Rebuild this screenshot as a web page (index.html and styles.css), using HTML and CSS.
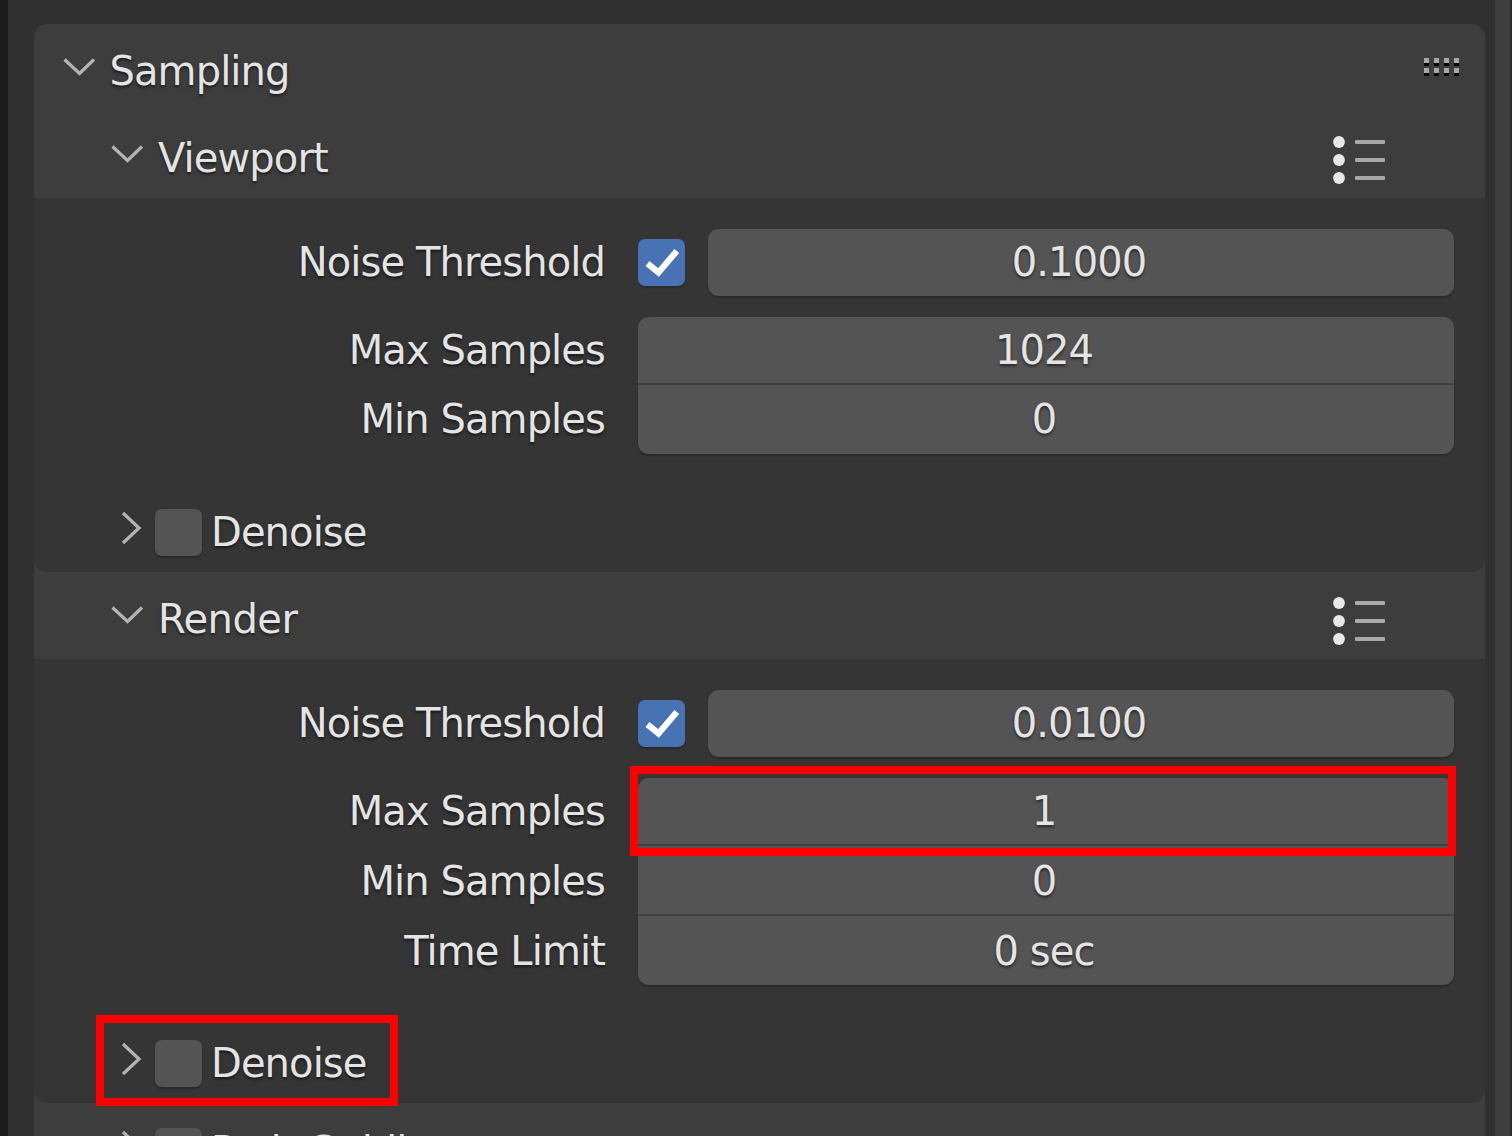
FILE: index.html
```html
<!DOCTYPE html>
<html lang="en">
<head>
<meta charset="utf-8">
<title>Sampling</title>
<link rel="stylesheet" href="styles.css">
</head>
<body>
<svg class="defs" aria-hidden="true">
  <symbol id="down" viewBox="0 0 34 20"><path d="M2.5 2.5 17.5 16.5 32 2.5"/></symbol>
  <symbol id="right" viewBox="0 0 22 36"><path d="M3 3 19 18 3 33"/></symbol>
  <symbol id="check" viewBox="0 0 47 47"><path d="M9.5 24.5 20.5 33.5 38.8 12"/></symbol>
  <symbol id="list" viewBox="0 0 54 50">
    <g class="dots"><circle cx="7" cy="7" r="5.9"/><circle cx="7" cy="25" r="5.9"/><circle cx="7" cy="43" r="5.9"/></g>
    <g class="lines"><rect x="23" y="5" width="30" height="4" rx="1"/><rect x="23" y="23" width="30" height="4" rx="1"/><rect x="23" y="41" width="30" height="4" rx="1"/></g>
  </symbol>
</svg>
<div class="window">
  <div class="edge"></div>
  <main class="panel">
    <header class="head head-main">
      <svg class="down"><use href="#down"/></svg><h1>Sampling</h1>
      <div class="grip"><i></i><i></i><i></i><i></i><i></i><i></i><i></i><i></i></div>
    </header>
    <header class="head">
      <svg class="down"><use href="#down"/></svg><h2>Viewport</h2>
      <svg class="list"><use href="#list"/></svg>
    </header>
    <section class="body">
      <div class="row"><label>Noise Threshold</label><span class="box on"><svg><use href="#check"/></svg></span><div class="field">0.1000</div></div>
      <div class="group">
        <div class="row first"><label>Max Samples</label><div class="field">1024</div></div>
        <div class="row last"><label>Min Samples</label><div class="field">0</div></div>
      </div>
      <div class="toggle"><svg class="right"><use href="#right"/></svg><span class="box"></span><span class="name">Denoise</span></div>
    </section>
    <header class="head">
      <svg class="down"><use href="#down"/></svg><h2 class="render">Render</h2>
      <svg class="list"><use href="#list"/></svg>
    </header>
    <section class="body">
      <div class="row"><label>Noise Threshold</label><span class="box on"><svg><use href="#check"/></svg></span><div class="field">0.0100</div></div>
      <div class="group">
        <div class="row first"><label>Max Samples</label><div class="field">1</div><div class="mark mark-field"></div></div>
        <div class="row middle"><label>Min Samples</label><div class="field">0</div></div>
        <div class="row last low"><label>Time Limit</label><div class="field">0 sec</div></div>
      </div>
      <div class="toggle"><svg class="right"><use href="#right"/></svg><span class="box"></span><span class="name">Denoise</span><div class="mark mark-toggle"></div></div>
    </section>
    <header class="toggle next"><svg class="right"><use href="#right"/></svg><span class="box"></span><span class="name">Path Guiding</span></header>
  </main>
  <div class="scroll"></div>
</div>
</body>
</html>
```
FILE: styles.css
```css
* { box-sizing: border-box; }
body {
  margin: 0;
  background: #303030;
  color: #e4e4e4;
  font: 40px/1.164 "DejaVu Sans", sans-serif;
  letter-spacing: -0.9px;
  white-space: nowrap;
  text-shadow: 0 2px 3px rgba(0, 0, 0, .55);
}
h1, h2 { margin: 0; font: inherit; }
.defs { position: absolute; width: 0; height: 0; }
.window {
  display: grid;
  grid-template-columns: 8px 1477px 25px;
  height: 1136px;
  overflow: hidden;
}
.edge { background: #1d1d1d; }
.panel {
  margin: 24px 0 0 26px;
  height: 1130px;
  background: #3d3d3d;
  border-radius: 13px 13px 0 0;
}
.scroll { margin-left: 10px; background: #3e3e3e; box-shadow: 2px 0 0 #2b2b2b; }

.head { display: flex; align-items: center; height: 87px; padding: 7px 99px 0 76px; }
.head-main { padding: 7px 26px 0 28px; }
.down { flex: none; width: 34px; height: 20px; margin-bottom: 9px; }
.down, .right { fill: none; stroke: #b4b4b4; stroke-width: 3.2; }
h1 { margin-left: 13.5px; }
h2 { margin-left: 14px; }
.render { letter-spacing: -0.5px; }
.list { width: 54px; height: 50px; margin: 4px 0 0 auto; }
.dots { fill: #e8e8e8; }
.lines { fill: #a9a9a9; }
.grip { display: grid; grid-template-columns: repeat(4, 5px); gap: 5px; margin: 0 0 12px auto; }
.grip i { height: 5px; background: #a8a8a8; box-shadow: 0 3px 0 #060606; }

.body { padding-top: 31px; background: #353535; border-radius: 0 0 13px 13px; }
.row { display: flex; align-items: center; height: 67px; padding-right: 31px; position: relative; }
label { width: 571px; margin-right: 33px; text-align: right; }
.row .box { margin-right: 23px; }
.field {
  flex: 1;
  align-self: stretch;
  display: flex;
  align-items: center;
  justify-content: center;
  padding-right: 4px;
  background: #545454;
  border-radius: 11px;
  box-shadow: 0 2px 2px rgba(0, 0, 0, .22);
}
.group { margin-top: 21px; }
.first { height: 68px; }
.first label { padding-bottom: 2px; }
.middle { height: 70px; }
.last { height: 69px; }
.low label, .low .field { padding-top: 1px; }
.first .field, .middle .field { border-bottom: 2px solid #404040; box-shadow: none; }
.first .field { border-radius: 11px 11px 0 0; }
.middle .field { padding-top: 2px; border-radius: 0; }
.last .field { border-radius: 0 0 11px 11px; }
.box {
  flex: none;
  width: 47px;
  height: 47px;
  background: #545454;
  border-radius: 7px;
  box-shadow: 0 2px 2px rgba(0, 0, 0, .22);
}
.on { background: #4772b3; }
.on svg { display: block; width: 47px; height: 47px; fill: none; stroke: #fff; stroke-width: 6.2; }

.toggle { display: flex; align-items: center; height: 80px; margin-top: 38px; padding-left: 86px; position: relative; }
.right { flex: none; width: 22px; height: 36px; margin: 0 13px 8px 0; }
.name { margin-left: 9px; }
.next { margin-top: 8px; }

.mark { position: absolute; z-index: 1; border: 8px solid #f00; }
.mark-field { left: 596px; top: -12px; width: 826px; height: 90px; }
.mark-toggle { left: 62px; top: -8px; width: 302px; height: 91px; }
```
